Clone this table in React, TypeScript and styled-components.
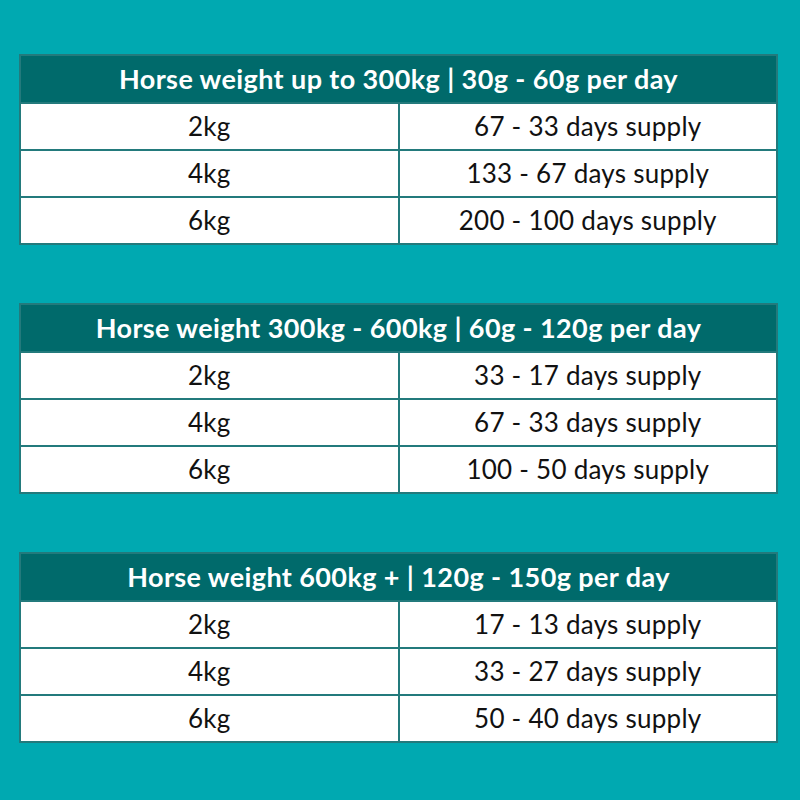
import React from "react";
import styled, { createGlobalStyle } from "styled-components";

const colourPage = "#00a9b1";
const colourHeader = "#006a6b";
const colourLine = "#237a7c";

const GlobalStyle = createGlobalStyle`
  html, body {
    margin: 0;
    padding: 0;
    background: ${colourPage};
  }
  body {
    font-family: "Lato", "Noto Sans", sans-serif;
  }
`;

const Page = styled.main`
  width: 800px;
  height: 800px;
  box-sizing: border-box;
  padding: 54px 22px 0 19px;
  display: flex;
  flex-direction: column;
  gap: 58px;
`;

const Table = styled.table`
  width: 759px;
  border-collapse: collapse;
  table-layout: fixed;
  background: #ffffff;
  border: 2px solid ${colourLine};
`;

const HeadCell = styled.th`
  height: 44px;
  padding: 0 0 2px;
  background: ${colourHeader};
  color: #ffffff;
  font-size: 27px;
  font-weight: 700;
  letter-spacing: 0.4px;
  text-align: center;
  border: 2px solid ${colourLine};
  border-bottom: none;
`;

const Cell = styled.td`
  height: 43px;
  padding: 0 0 2px;
  color: #111111;
  font-size: 26px;
  letter-spacing: 0.25px;
  text-align: center;
  border: 2px solid ${colourLine};
`;

type Supply = { size: string; days: string };

type Band = { title: string; rows: Supply[] };

const bands: Band[] = [
  {
    title: "Horse weight up to 300kg | 30g - 60g per day",
    rows: [
      { size: "2kg", days: "67 - 33 days supply" },
      { size: "4kg", days: "133 - 67 days supply" },
      { size: "6kg", days: "200 - 100 days supply" },
    ],
  },
  {
    title: "Horse weight 300kg - 600kg | 60g - 120g per day",
    rows: [
      { size: "2kg", days: "33 - 17 days supply" },
      { size: "4kg", days: "67 - 33 days supply" },
      { size: "6kg", days: "100 - 50 days supply" },
    ],
  },
  {
    title: "Horse weight 600kg + | 120g - 150g per day",
    rows: [
      { size: "2kg", days: "17 - 13 days supply" },
      { size: "4kg", days: "33 - 27 days supply" },
      { size: "6kg", days: "50 - 40 days supply" },
    ],
  },
];

const SupplyTable = ({ band }: { band: Band }) => (
  <Table>
    <thead>
      <tr>
        <HeadCell colSpan={2}>{band.title}</HeadCell>
      </tr>
    </thead>
    <tbody>
      {band.rows.map((row) => (
        <tr key={row.size}>
          <Cell>{row.size}</Cell>
          <Cell>{row.days}</Cell>
        </tr>
      ))}
    </tbody>
  </Table>
);

export default function App() {
  return (
    <>
      <GlobalStyle />
      <Page>
        {bands.map((band) => (
          <SupplyTable key={band.title} band={band} />
        ))}
      </Page>
    </>
  );
}
